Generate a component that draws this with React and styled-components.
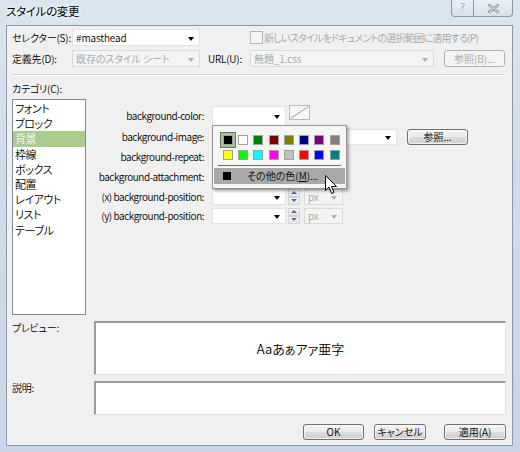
import React from 'react'
import styled, { createGlobalStyle } from 'styled-components'

const GlobalStyle = createGlobalStyle`
  html, body { margin: 0; padding: 0; background: #ffffff; }
  body {
    font-family: "Noto Sans CJK JP", sans-serif;
    font-size: 10px;
    line-height: 1.2;
    font-weight: 350;
    font-feature-settings: "palt";
    color: #000;
  }
`

const SWATCHES = [
  '#000000', '#ffffff', '#008000', '#800000', '#808000', '#000080', '#800080', '#808080',
  '#ffff00', '#00ff00', '#00ffff', '#ff00ff', '#c0c0c0', '#ff0000', '#0000ff', '#008080',
]

const CATEGORIES = ['フォント', 'ブロック', '背景', '枠線', 'ボックス', '配置', 'レイアウト', 'リスト', 'テーブル']

const Arrow = ({ disabled }) => <ArrowMark $disabled={disabled} />

const Cursor = () => (
  <CursorSvg width="13" height="20" viewBox="0 0 13 20">
    <path d="M0.5 0.5 L0.5 15.5 L4 12 L6.5 18.5 L9 17.5 L6.5 11.5 L11.5 11.5 Z" fill="#fff" stroke="#000" strokeWidth="1" strokeLinejoin="round" />
  </CursorSvg>
)

const PositionControls = () => (
  <>
    <Combo $w={74} $h={16}><Arrow /></Combo>
    <Spinner>
      <SpinHalf><SpinUp /></SpinHalf>
      <SpinHalf><SpinDown /></SpinHalf>
    </Spinner>
    <Combo $w={39} $h={16} $ml={4} $disabled>
      <ComboText $disabled>px</ComboText>
      <Arrow disabled />
    </Combo>
  </>
)

const App = () => (
  <>
    <GlobalStyle />
    <Window>
      <TitleBar>
        <Title>スタイルの変更</Title>
        <CaptionButtons>
          <CaptionButton $w={23}>?</CaptionButton>
          <CaptionButton $w={40}>
            <svg width="11" height="9" viewBox="0 0 11 9">
              <path d="M1 1 L10 8 M10 1 L1 8" stroke="#8a8f96" strokeWidth="2.6" strokeLinecap="round" />
              <path d="M1 1 L10 8 M10 1 L1 8" stroke="#f4f6f8" strokeWidth="1" strokeLinecap="round" />
            </svg>
          </CaptionButton>
        </CaptionButtons>
      </TitleBar>

      <Client>
        <TopRow>
          <FieldLabel>セレクター(S):</FieldLabel>
          <Combo $w={128} $h={17}>
            <ComboText>#masthead</ComboText>
            <Arrow />
          </Combo>
          <CheckBox />
          <CheckText>新しいスタイルをドキュメントの選択範囲に適用する(P)</CheckText>
        </TopRow>
        <TopRow $mt={4}>
          <FieldLabel>定義先(D):</FieldLabel>
          <Combo $w={128} $h={17} $disabled>
            <ComboText $disabled>既存のスタイル シート</ComboText>
            <Arrow disabled />
          </Combo>
          <UrlLabel>URL(U):</UrlLabel>
          <Combo $w={184} $h={17} $disabled>
            <ComboText $disabled>無題_1.css</ComboText>
            <Arrow disabled />
          </Combo>
          <Button $w={61} $h={17} $ml={10} disabled>参照(B)...</Button>
        </TopRow>

        <Separator />
        <SectionLabel>カテゴリ(C):</SectionLabel>

        <Body>
          <ListBox>
            {CATEGORIES.map((c) => (
              <ListItem key={c} $selected={c === '背景'}>{c}</ListItem>
            ))}
          </ListBox>

          <Form>
            <PropLabel>background-color:</PropLabel>
            <PropCell>
              <Combo $w={74} $h={20}>
                <Arrow />
              </Combo>
              <ColorButton>
                <svg width="19" height="13" viewBox="0 0 19 13">
                  <path d="M0.5 12.5 L18.5 0.5" stroke="#9a9a9a" strokeWidth="1" />
                </svg>
              </ColorButton>
              <Palette>
                <SwatchGrid>
                  {SWATCHES.map((c, i) => (
                    <SwatchCell key={c}>
                      <Swatch $color={c} $selected={i === 0} />
                    </SwatchCell>
                  ))}
                </SwatchGrid>
                <PaletteRule />
                <MoreColors>
                  <MoreSquare />
                  <span>その他の色(<u>M</u>)...</span>
                </MoreColors>
                <Cursor />
              </Palette>
            </PropCell>

            <PropLabel>background-image:</PropLabel>
            <PropCell>
              <Combo $w={185} $h={16}>
                <Arrow />
              </Combo>
              <Button $w={61} $h={16} $ml={10}>参照...</Button>
            </PropCell>

            <PropLabel>background-repeat:</PropLabel>
            <PropCell>
              <Combo $w={74} $h={16}><Arrow /></Combo>
            </PropCell>

            <PropLabel>background-attachment:</PropLabel>
            <PropCell>
              <Combo $w={74} $h={16}><Arrow /></Combo>
            </PropCell>

            <PropLabel>(x) background-position:</PropLabel>
            <PropCell>
              <PositionControls />
            </PropCell>

            <PropLabel>(y) background-position:</PropLabel>
            <PropCell>
              <PositionControls />
            </PropCell>
          </Form>
        </Body>

        <BoxRow $mt={6}>
          <BoxLabel>プレビュー:</BoxLabel>
          <SunkenBox $h={54}>
            <PreviewText>Aaあぁアァ亜字</PreviewText>
          </SunkenBox>
        </BoxRow>
        <BoxRow $mt={6}>
          <BoxLabel>説明:</BoxLabel>
          <SunkenBox $h={34} />
        </BoxRow>

        <ButtonRow>
          <Button $w={61} $h={16}>OK</Button>
          <Button $w={52} $h={16} $ml={10}>キャンセル</Button>
          <Button $w={62} $h={16} $ml={18}>適用(A)</Button>
        </ButtonRow>
      </Client>
    </Window>
  </>
)

const Window = styled.div`
  width: 520px;
  height: 452px;
  box-sizing: border-box;
  background: linear-gradient(to bottom, #dbe5f0, #cfdbe8 40%, #c9d6e5);
  padding: 0 7px 6px 6px;
  display: flex;
  flex-direction: column;
`

const TitleBar = styled.div`
  height: 25px;
  flex: none;
  display: flex;
  justify-content: space-between;
  align-items: flex-start;
`

const Title = styled.div`
  padding-top: 5px;
  font-size: 11.5px;
  font-weight: 400;
  letter-spacing: -0.3px;
  color: #000;
  text-shadow: 0 0 6px #f4f8fc, 0 0 3px #f4f8fc;
`

const CaptionButtons = styled.div`
  display: flex;
  height: 17px;
`

const CaptionButton = styled.div`
  width: ${(p) => p.$w}px;
  height: 17px;
  box-sizing: border-box;
  border: 1px solid #8c99a8;
  border-top: none;
  margin-left: -1px;
  background: linear-gradient(to bottom, #e9eff6, #d7e1ec);
  display: flex;
  align-items: center;
  justify-content: center;
  font-family: "DejaVu Sans", sans-serif;
  font-size: 11px;
  color: #6a7078;
  &:first-child { border-bottom-left-radius: 4px; }
  &:last-child { border-bottom-right-radius: 4px; }
`

const Client = styled.div`
  flex: 1;
  border: 1px solid #8d98a5;
  background: #f0f0f0;
  padding: 3px 6px 0 5px;
  display: flex;
  flex-direction: column;
`

const TopRow = styled.div`
  display: flex;
  align-items: center;
  margin-top: ${(p) => p.$mt || 0}px;
`

const FieldLabel = styled.div`
  width: 60px;
  flex: none;
  white-space: nowrap;
  letter-spacing: -0.2px;
`

const UrlLabel = styled.div`
  width: 42px;
  margin-left: 8px;
  flex: none;
  letter-spacing: -0.2px;
`

const Combo = styled.div`
  position: relative;
  width: ${(p) => p.$w}px;
  height: ${(p) => p.$h}px;
  margin-left: ${(p) => p.$ml || 0}px;
  flex: none;
  box-sizing: border-box;
  border: 1px solid ${(p) => (p.$disabled ? '#d9d9d9' : '#e3e3e3')};
  background: ${(p) => (p.$disabled ? '#f4f4f4' : '#ffffff')};
  display: flex;
  align-items: center;
  padding-left: 3px;
`

const ComboText = styled.span`
  color: ${(p) => (p.$disabled ? '#a3a3a3' : '#000')};
  white-space: nowrap;
  letter-spacing: -0.1px;
`

const ArrowMark = styled.span`
  position: absolute;
  right: 5px;
  top: 50%;
  margin-top: -1px;
  width: 0;
  height: 0;
  border-left: 3.5px solid transparent;
  border-right: 3.5px solid transparent;
  border-top: 4px solid ${(p) => (p.$disabled ? '#b0b0b0' : '#000')};
`

const CheckBox = styled.div`
  width: 13px;
  height: 13px;
  margin-left: 50px;
  box-sizing: border-box;
  border: 1px solid #b5b5b5;
  background: #f4f4f4;
  flex: none;
`

const CheckText = styled.div`
  margin-left: 1px;
  color: #a3a3a3;
  white-space: nowrap;
  letter-spacing: -0.75px;
`

const Button = styled.button`
  width: ${(p) => p.$w}px;
  height: ${(p) => p.$h}px;
  margin-left: ${(p) => p.$ml || 0}px;
  flex: none;
  padding: 0;
  box-sizing: border-box;
  border: 1px solid #707070;
  border-radius: 3px;
  background: linear-gradient(to bottom, #f2f2f2 0%, #ebebeb 50%, #dddddd 51%, #cfcfcf 100%);
  box-shadow: inset 0 0 0 1px rgba(255, 255, 255, 0.7);
  font-family: "Noto Sans CJK JP", sans-serif;
  font-feature-settings: "palt";
  font-size: 10px;
  font-weight: 350;
  line-height: 1;
  white-space: nowrap;
  color: #000;
  &:disabled {
    border-color: #adb2b5;
    background: #f4f4f4;
    color: #a3a3a3;
    box-shadow: none;
  }
`

const Separator = styled.div`
  margin-top: 7px;
  height: 1px;
  background: #d5d5d5;
  border-bottom: 1px solid #ffffff;
`

const SectionLabel = styled.div`
  margin-top: 5px;
  height: 16px;
  line-height: 16px;
  letter-spacing: -0.2px;
`

const Body = styled.div`
  margin-top: 2px;
  display: flex;
  align-items: flex-start;
`

const ListBox = styled.div`
  width: 74px;
  height: 216px;
  flex: none;
  box-sizing: border-box;
  border: 1px solid #828790;
  background: #fff;
  padding: 1px 0 0 0;
`

const ListItem = styled.div`
  height: 15.2px;
  line-height: 15.2px;
  padding-left: 2px;
  font-size: 11px;
  letter-spacing: -0.4px;
  background: ${(p) => (p.$selected ? '#a9cb8b' : 'transparent')};
  color: ${(p) => (p.$selected ? '#ffffff' : '#000')};
`

const Form = styled.div`
  flex: 1;
  padding-top: 6px;
  display: grid;
  grid-template-columns: 118px 1fr;
  grid-template-rows: 21px 21px 20px 20px 19px 19px;
  column-gap: 8px;
`

const PropLabel = styled.div`
  display: flex;
  align-items: center;
  justify-content: flex-end;
  white-space: nowrap;
  letter-spacing: -0.45px;
`

const PropCell = styled.div`
  position: relative;
  display: flex;
  align-items: center;
`

const ColorButton = styled.div`
  align-self: flex-start;
  margin-left: 3px;
  width: 21px;
  height: 15px;
  box-sizing: border-box;
  border: 1px solid #b9b9b9;
  background: #f7f7f7;
  display: flex;
`

const Palette = styled.div`
  position: absolute;
  left: 0;
  top: 20px;
  z-index: 5;
  width: 135px;
  height: 64px;
  box-sizing: border-box;
  border: 1px solid #979797;
  background: #f5f5f5;
  box-shadow: 2px 2px 3px rgba(0, 0, 0, 0.35);
  padding: 6px 1px 0 1px;
`

const SwatchGrid = styled.div`
  display: grid;
  grid-template-columns: repeat(8, 15.3px);
  grid-auto-rows: 15px;
  padding-left: 6px;
`

const SwatchCell = styled.div`
  display: flex;
  align-items: center;
  justify-content: center;
`

const Swatch = styled.div`
  width: 10px;
  height: 10px;
  box-sizing: border-box;
  border: 1px solid #a0a0a0;
  background: ${(p) => p.$color};
  outline: ${(p) => (p.$selected ? '2px solid #a8c48e' : 'none')};
  box-shadow: ${(p) => (p.$selected ? '0 0 0 3px #6e6e6e' : 'none')};
`

const PaletteRule = styled.div`
  margin: 3px 4px 2px 4px;
  height: 1px;
  background: #6d6d6d;
`

const MoreColors = styled.div`
  height: 16px;
  background: #a9a9a9;
  display: flex;
  align-items: center;
  padding-left: 9px;
  gap: 16px;
  letter-spacing: 0;
  white-space: nowrap;
`

const MoreSquare = styled.span`
  width: 8px;
  height: 8px;
  background: #000;
  flex: none;
`

const CursorSvg = styled.svg`
  position: absolute;
  left: 112px;
  top: 49px;
`

const Spinner = styled.div`
  margin-left: 2px;
  width: 12px;
  height: 16px;
  flex: none;
  display: flex;
  flex-direction: column;
`

const SpinHalf = styled.div`
  flex: 1;
  box-sizing: border-box;
  border: 1px solid #d3d3d3;
  background: linear-gradient(to bottom, #f6f6f6, #e6e6e6);
  display: flex;
  align-items: center;
  justify-content: center;
`

const SpinUp = styled.span`
  width: 0;
  height: 0;
  border-left: 3px solid transparent;
  border-right: 3px solid transparent;
  border-bottom: 3px solid #4e6a9a;
`

const SpinDown = styled.span`
  width: 0;
  height: 0;
  border-left: 3px solid transparent;
  border-right: 3px solid transparent;
  border-top: 3px solid #4e6a9a;
`

const BoxRow = styled.div`
  margin-top: ${(p) => p.$mt || 0}px;
  display: flex;
  align-items: flex-start;
`

const BoxLabel = styled.div`
  width: 82px;
  flex: none;
  letter-spacing: -0.2px;
  line-height: 14px;
`

const SunkenBox = styled.div`
  flex: 1;
  height: ${(p) => p.$h}px;
  box-sizing: border-box;
  background: #fff;
  border-style: solid;
  border-width: 2px 1px 1px 2px;
  border-color: #9c9c9c #e3e3e3 #e3e3e3 #9c9c9c;
  display: flex;
  align-items: center;
  justify-content: center;
`

const PreviewText = styled.div`
  font-size: 13px;
  font-weight: 350;
  letter-spacing: 0;
`

const ButtonRow = styled.div`
  margin-top: 9px;
  display: flex;
  justify-content: flex-end;
`

export default App
